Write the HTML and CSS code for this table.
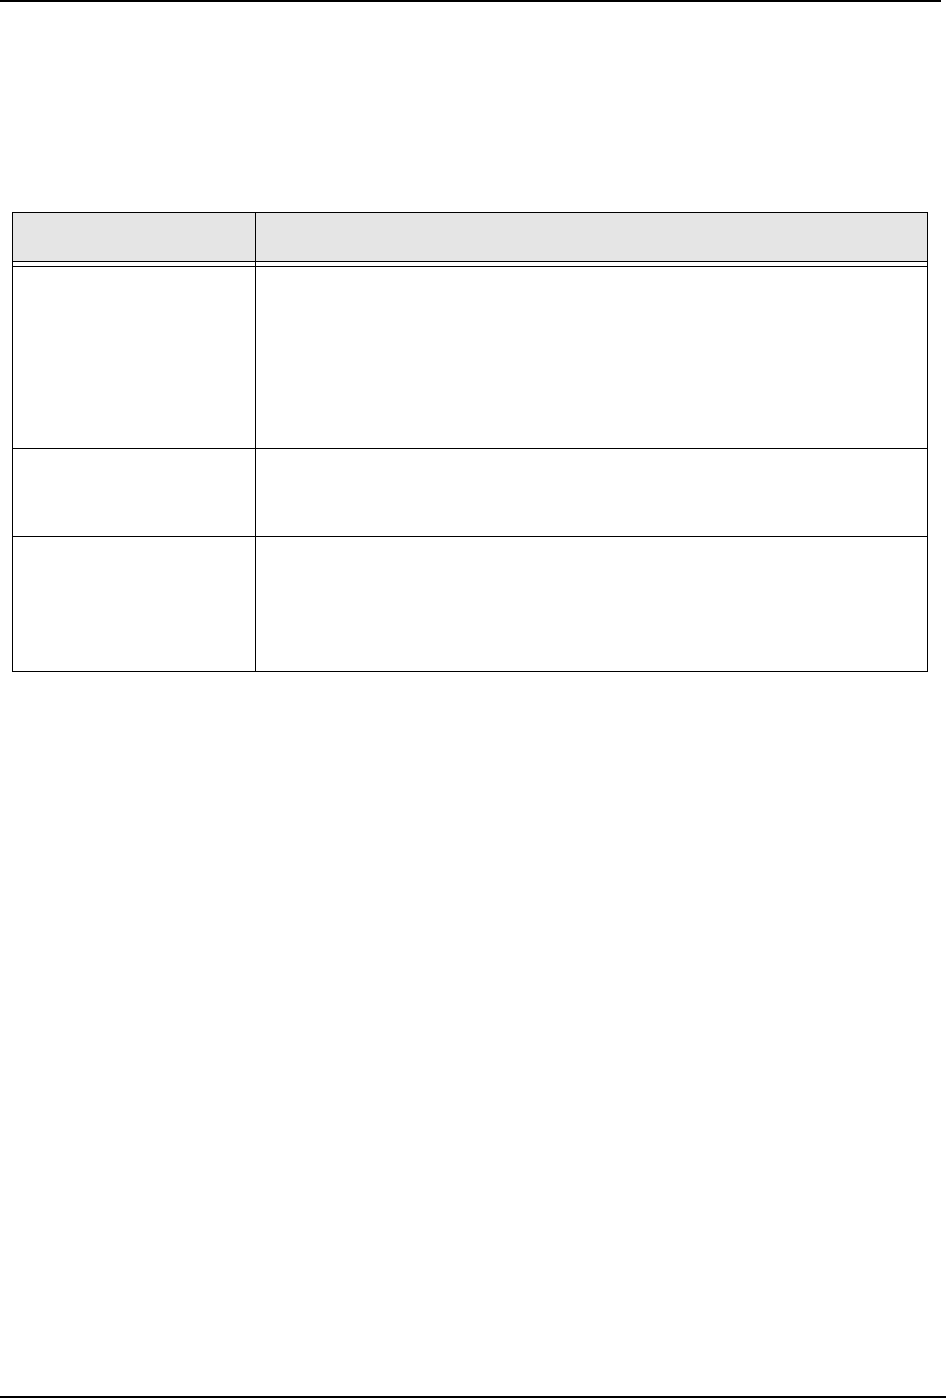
FILE: index.html
```html
<!DOCTYPE html>
<html lang="en">
<head>
<meta charset="utf-8">
<title>Page</title>
<link rel="stylesheet" href="styles.css">
</head>
<body>
<div class="page">
  <div class="top-rule"></div>
  <div class="table">
    <div class="row head">
      <div class="cell first"></div>
      <div class="cell"></div>
    </div>
    <div class="row gap">
      <div class="cell first"></div>
      <div class="cell"></div>
    </div>
    <div class="row r1">
      <div class="cell first"></div>
      <div class="cell"></div>
    </div>
    <div class="row r2">
      <div class="cell first"></div>
      <div class="cell"></div>
    </div>
    <div class="row r3">
      <div class="cell first"></div>
      <div class="cell"></div>
    </div>
  </div>
  <div class="spacer"></div>
  <div class="bottom-rule"></div>
</div>
</body>
</html>
```

FILE: styles.css
```css
html, body {
  margin: 0;
  padding: 0;
  background: #fff;
  font-family: "Liberation Sans", Arial, sans-serif;
}
.page {
  width: 946px;
  height: 1398px;
  display: flex;
  flex-direction: column;
}
.top-rule {
  width: 941px;
  height: 2px;
  background: #000;
  flex: none;
}
.table {
  margin: 210px 0 0 12px;
  width: 916px;
  box-sizing: border-box;
  border: 1px solid #000;
  flex: none;
}
.row {
  display: grid;
  grid-template-columns: 243px 1fr;
  border-bottom: 1px solid #000;
}
.row:last-child {
  border-bottom: none;
}
.cell.first {
  border-right: 1px solid #000;
}
.head {
  height: 48px;
  background: #e5e5e5;
}
.gap { height: 4px; }
.r1 { height: 181px; }
.r2 { height: 87px; }
.r3 { height: 134px; }
.spacer { flex: 1; }
.bottom-rule {
  width: 946px;
  height: 2px;
  background: #000;
  flex: none;
}
```
